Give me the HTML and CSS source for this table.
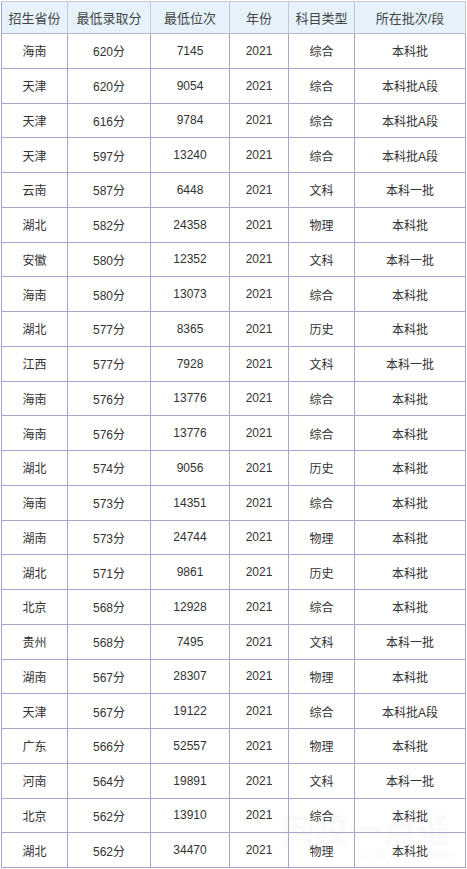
FILE: index.html
```html
<!DOCTYPE html>
<html lang="zh">
<head>
<meta charset="utf-8">
<title>录取分数</title>
<link rel="stylesheet" href="styles.css">
</head>
<body>
<div class="wrap">
<table class="score">
<colgroup>
<col class="c1"><col class="c2"><col class="c3"><col class="c4"><col class="c5"><col class="c6">
</colgroup>
<thead>
<tr><th>招生省份</th><th>最低录取分</th><th>最低位次</th><th>年份</th><th>科目类型</th><th>所在批次/段</th></tr>
</thead>
<tbody>
<tr><td>海南</td><td>620分</td><td>7145</td><td>2021</td><td>综合</td><td>本科批</td></tr>
<tr><td>天津</td><td>620分</td><td>9054</td><td>2021</td><td>综合</td><td>本科批A段</td></tr>
<tr><td>天津</td><td>616分</td><td>9784</td><td>2021</td><td>综合</td><td>本科批A段</td></tr>
<tr><td>天津</td><td>597分</td><td>13240</td><td>2021</td><td>综合</td><td>本科批A段</td></tr>
<tr><td>云南</td><td>587分</td><td>6448</td><td>2021</td><td>文科</td><td>本科一批</td></tr>
<tr><td>湖北</td><td>582分</td><td>24358</td><td>2021</td><td>物理</td><td>本科批</td></tr>
<tr><td>安徽</td><td>580分</td><td>12352</td><td>2021</td><td>文科</td><td>本科一批</td></tr>
<tr><td>海南</td><td>580分</td><td>13073</td><td>2021</td><td>综合</td><td>本科批</td></tr>
<tr><td>湖北</td><td>577分</td><td>8365</td><td>2021</td><td>历史</td><td>本科批</td></tr>
<tr><td>江西</td><td>577分</td><td>7928</td><td>2021</td><td>文科</td><td>本科一批</td></tr>
<tr><td>海南</td><td>576分</td><td>13776</td><td>2021</td><td>综合</td><td>本科批</td></tr>
<tr><td>海南</td><td>576分</td><td>13776</td><td>2021</td><td>综合</td><td>本科批</td></tr>
<tr><td>湖北</td><td>574分</td><td>9056</td><td>2021</td><td>历史</td><td>本科批</td></tr>
<tr><td>海南</td><td>573分</td><td>14351</td><td>2021</td><td>综合</td><td>本科批</td></tr>
<tr><td>湖南</td><td>573分</td><td>24744</td><td>2021</td><td>物理</td><td>本科批</td></tr>
<tr><td>湖北</td><td>571分</td><td>9861</td><td>2021</td><td>历史</td><td>本科批</td></tr>
<tr><td>北京</td><td>568分</td><td>12928</td><td>2021</td><td>综合</td><td>本科批</td></tr>
<tr><td>贵州</td><td>568分</td><td>7495</td><td>2021</td><td>文科</td><td>本科一批</td></tr>
<tr><td>湖南</td><td>567分</td><td>28307</td><td>2021</td><td>物理</td><td>本科批</td></tr>
<tr><td>天津</td><td>567分</td><td>19122</td><td>2021</td><td>综合</td><td>本科批A段</td></tr>
<tr><td>广东</td><td>566分</td><td>52557</td><td>2021</td><td>物理</td><td>本科批</td></tr>
<tr><td>河南</td><td>564分</td><td>19891</td><td>2021</td><td>文科</td><td>本科一批</td></tr>
<tr><td>北京</td><td>562分</td><td>13910</td><td>2021</td><td>综合</td><td>本科批</td></tr>
<tr><td>湖北</td><td>562分</td><td>34470</td><td>2021</td><td>物理</td><td>本科批</td></tr>
</tbody>
</table>
<div class="watermark"><span class="wm-cn">网校一点通</span><span class="wm-en">copyedu.com</span></div>
</div>
</body>
</html>
```
FILE: styles.css
```css
html, body {
  margin: 0;
  padding: 0;
  background: #ffffff;
}
body {
  font-family: "Liberation Sans", "Noto Sans CJK SC", sans-serif;
  color: #333333;
  font-size: 12px;
}
.wrap {
  position: relative;
  padding: 1px 0 0 1px;
}
.score {
  border-collapse: separate;
  border-spacing: 0;
  table-layout: fixed;
  width: 464px;
  border-left: 1px solid #a9a3cf;
  border-top: 1px solid #c9c9d4;
}
.c1 { width: 66px; }
.c2 { width: 83px; }
.c3 { width: 79px; }
.c4 { width: 59px; }
.c5 { width: 66px; }
.c6 { width: 111px; }
.score th, .score td {
  text-align: center;
  vertical-align: middle;
  padding: 0;
  border-right: 1px solid #a9a3cf;
  border-bottom: 1px solid #a9a3cf;
  white-space: nowrap;
}
.score th {
  background: #e6f3fc;
  font-weight: normal;
  font-size: 13px;
  height: 31px;
  color: #444444;
  border-right-color: #c6c4d6;
  border-bottom-color: #b8b4d4;
}
.score td {
  height: 33.75px;
}
.watermark {
  position: absolute;
  left: 282px;
  top: 812px;
  width: 170px;
  pointer-events: none;
  display: flex;
  flex-direction: column;
  align-items: flex-end;
  line-height: 1;
}
.wm-cn {
  font-family: "Noto Sans CJK SC", sans-serif;
  font-weight: 900;
  font-size: 32px;
  color: rgba(190, 190, 190, 0.08);
  letter-spacing: 2px;
}
.wm-en {
  font-family: "Liberation Sans", sans-serif;
  font-size: 15px;
  color: rgba(190, 190, 190, 0.1);
  margin-top: 2px;
}
```
